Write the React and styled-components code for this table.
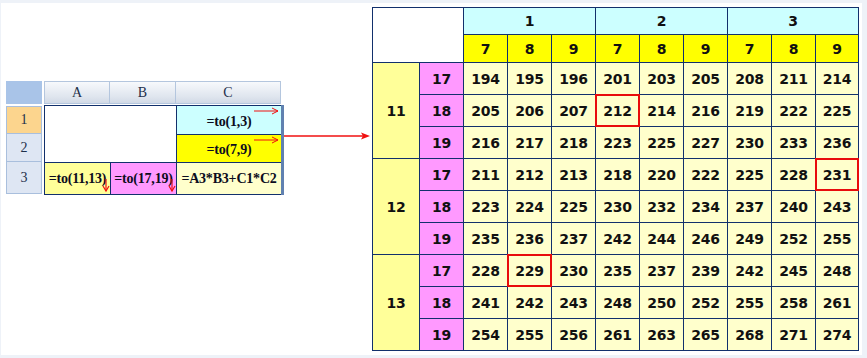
import React from "react";
import styled, { createGlobalStyle } from "styled-components";

const GlobalStyle = createGlobalStyle`
  html, body {
    margin: 0;
    padding: 0;
    background: #eef2f8;
  }
`;

const NAVY = "#12306c";

export const Panel = styled.div`
  display: flex;
  align-items: flex-start;
  width: 861px;
  height: 352px;
  box-sizing: border-box;
  margin: 3px 0 0 1px;
  padding: 4px 0 0 5px;
  background: #ffffff;
`;

/* ---------- left spreadsheet ---------- */

export const Sheet = styled.div`
  display: grid;
  grid-template-columns: 38px 240px;
  grid-template-rows: 24px 90px;
  margin-top: 74px;
  font-family: "Liberation Serif", "Times New Roman", serif;
`;

export const Corner = styled.div`
  width: 36px;
  height: 23px;
  background: #a9c4e8;
`;

export const ColHeads = styled.div`
  display: grid;
  grid-template-columns: 66px 66px 105px;
  height: 23px;
`;

export const ColHead = styled.div`
  display: flex;
  align-items: center;
  justify-content: center;
  box-sizing: border-box;
  border: 1px solid #b4c6de;
  border-left: ${(p) => (p.first ? "1px solid #b4c6de" : "none")};
  background: linear-gradient(#f7f9fc, #dfe5ee 70%, #d2dae6);
  color: #1d2f4a;
  font-size: 14px;
`;

export const RowHeads = styled.div`
  display: grid;
  grid-template-rows: 28px 28px 32px;
  width: 36px;
  margin-top: 1px;
`;

export const RowHead = styled.div`
  display: flex;
  align-items: center;
  justify-content: center;
  box-sizing: border-box;
  border: 1px solid #a9bfdd;
  border-top: ${(p) => (p.first ? "1px solid #a9bfdd" : "none")};
  background: ${(p) => (p.active ? "#fcd58e" : "#dee6f3")};
  color: #1d2f4a;
  font-size: 14px;
`;

export const Body = styled.div`
  display: grid;
  grid-template-columns: 65px 65px 104px;
  grid-template-rows: 28px 27px 31px;
  gap: 1px;
  padding: 1px 0 1px 1px;
  background: ${NAVY};
  border-right: 3px solid #6081b0;
`;

export const Cell = styled.div`
  position: relative;
  display: flex;
  align-items: center;
  justify-content: center;
  padding-top: ${(p) => (p.low ? "3px" : "0")};
  box-sizing: border-box;
  background: ${(p) => p.bg || "#ffffff"};
  color: #0c0c20;
  font-size: 14px;
  font-weight: bold;
  white-space: nowrap;
  letter-spacing: -0.2px;
`;

export const Merged = styled(Cell)`
  grid-column: 1 / span 2;
  grid-row: 1 / span 2;
`;

const Marker = styled.svg`
  position: absolute;
  overflow: visible;
`;

const RightMark = () => (
  <Marker width="26" height="8" style={{ left: 77, top: 1 }}>
    <line x1="0" y1="4" x2="24" y2="4" stroke="#f01010" strokeWidth="1" />
    <polyline points="18,1 24,4 18,7" fill="none" stroke="#f01010" strokeWidth="1" />
  </Marker>
);

const DownMark = () => (
  <Marker width="8" height="13" style={{ left: 57, top: 16 }}>
    <line x1="4" y1="0" x2="4" y2="12" stroke="#f01010" strokeWidth="1.2" />
    <polyline points="1,7 4,12 7,7" fill="none" stroke="#f01010" strokeWidth="1.2" />
  </Marker>
);

/* ---------- connecting arrow ---------- */

export const Link = styled.svg`
  display: block;
  flex: none;
  margin-top: 123px;
`;

/* ---------- right result table ---------- */

export const Table = styled.div`
  display: grid;
  grid-template-columns: 46px 43px repeat(8, 43px) 42px;
  grid-template-rows: 26px 27px repeat(9, 31px);
  gap: 1px;
  padding: 1px;
  margin-left: 0;
  background: ${NAVY};
  font-family: "DejaVu Sans", Verdana, sans-serif;
  font-weight: bold;
  font-size: 14px;
  color: #111111;
`;

export const TCell = styled.div`
  position: relative;
  display: flex;
  align-items: center;
  justify-content: center;
  background: ${(p) => p.bg};
  grid-column: ${(p) => (p.cols ? `span ${p.cols}` : "auto")};
  grid-row: ${(p) => (p.rows ? `span ${p.rows}` : "auto")};
  letter-spacing: -0.2px;

  ${(p) =>
    p.mark &&
    `
    &::after {
      content: "";
      position: absolute;
      inset: -1px;
      border: 2px solid #e80c0c;
      z-index: 1;
    }
  `}
`;

const groups = [1, 2, 3];
const subs = [7, 8, 9];
const rowGroups = [11, 12, 13];
const rowSubs = [17, 18, 19];

const marked = new Set(["11-18-2-7", "12-17-3-9", "13-17-1-8"]);

export default function App() {
  return (
    <>
      <GlobalStyle />
      <Panel>
        <Sheet>
          <Corner />
          <ColHeads>
            <ColHead first>A</ColHead>
            <ColHead>B</ColHead>
            <ColHead>C</ColHead>
          </ColHeads>
          <RowHeads>
            <RowHead first active>1</RowHead>
            <RowHead>2</RowHead>
            <RowHead>3</RowHead>
          </RowHeads>
          <Body>
            <Merged />
            <Cell bg="#ccffff" low>
              =to(1,3)
              <RightMark />
            </Cell>
            <Cell bg="#ffff00" low>
              =to(7,9)
              <RightMark />
            </Cell>
            <Cell bg="#ffff99">
              =to(11,13)
              <DownMark />
            </Cell>
            <Cell bg="#ff99ff">
              =to(17,19)
              <DownMark />
            </Cell>
            <Cell bg="#ffffcc">=A3*B3+C1*C2</Cell>
          </Body>
        </Sheet>

        <Link width="88" height="12" viewBox="0 0 88 12">
          <line x1="0" y1="6" x2="80" y2="6" stroke="#f01010" strokeWidth="1.6" />
          <polygon points="77,2.5 86,6 77,9.5 79,6" fill="#f01010" />
        </Link>

        <Table>
          <TCell bg="#ffffff" cols={2} rows={2} />
          {groups.map((g) => (
            <TCell key={g} bg="#ccffff" cols={3}>
              {g}
            </TCell>
          ))}
          {groups.map((g) =>
            subs.map((s) => (
              <TCell key={`${g}-${s}`} bg="#ffff00">
                {s}
              </TCell>
            ))
          )}
          {rowGroups.map((r) =>
            rowSubs.map((rs, i) => (
              <React.Fragment key={`${r}-${rs}`}>
                {i === 0 && (
                  <TCell bg="#ffff99" rows={3}>
                    {r}
                  </TCell>
                )}
                <TCell bg="#ff99ff">{rs}</TCell>
                {groups.map((g) =>
                  subs.map((s) => (
                    <TCell
                      key={`${g}-${s}`}
                      bg="#ffffcc"
                      mark={marked.has(`${r}-${rs}-${g}-${s}`)}
                    >
                      {r * rs + g * s}
                    </TCell>
                  ))
                )}
              </React.Fragment>
            ))
          )}
        </Table>
      </Panel>
    </>
  );
}
